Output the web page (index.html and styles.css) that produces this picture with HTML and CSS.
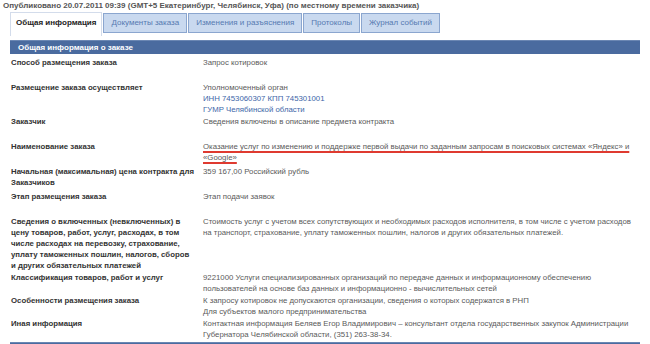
FILE: index.html
```html
<!DOCTYPE html>
<html lang="ru">
<head>
  <meta charset="UTF-8">
  <title>Общая информация о заказе</title>
  <link rel="stylesheet" href="styles.css">
</head>
<body>
  <div class="published">Опубликовано 20.07.2011 09:39 (GMT+5 Екатеринбург, Челябинск, Уфа) (по местному времени заказчика)</div>

  <div class="tabs">
    <div class="tab active">Общая информация</div>
    <div class="tab">Документы заказа</div>
    <div class="tab">Изменения и разъяснения</div>
    <div class="tab">Протоколы</div>
    <div class="tab">Журнал событий</div>
  </div>

  <div class="section">
    <div class="section-title">Общая информация о заказе</div>

    <div class="info">
      <div class="row">
        <div class="label">Способ размещения заказа</div>
        <div class="value">Запрос котировок</div>
      </div>
      <div class="row">
        <div class="label">Размещение заказа осуществляет</div>
        <div class="value">Уполномоченный орган<br><span class="link">ИНН 7453060307 КПП 745301001</span><br><span class="link">ГУМР Челябинской области</span></div>
      </div>
      <div class="row">
        <div class="label">Заказчик</div>
        <div class="value">Сведения включены в описание предмета контракта</div>
      </div>
      <div class="row">
        <div class="label">Наименование заказа</div>
        <div class="value"><span class="marked">Оказание услуг по изменению и поддержке первой выдачи по заданным запросам в поисковых системах «Яндекс» и «Google»</span></div>
      </div>
      <div class="row">
        <div class="label">Начальная (максимальная) цена контракта для Заказчиков</div>
        <div class="value">359 167,00 Российский рубль</div>
      </div>
      <div class="row">
        <div class="label">Этап размещения заказа</div>
        <div class="value">Этап подачи заявок</div>
      </div>
      <div class="row">
        <div class="label">Сведения о включенных (невключенных) в цену товаров, работ, услуг, расходах, в том числе расходах на перевозку, страхование, уплату таможенных пошлин, налогов, сборов и&nbsp;других обязательных платежей</div>
        <div class="value">Стоимость услуг с учетом всех сопутствующих и необходимых расходов исполнителя, в том числе с учетом расходов на транспорт, страхование, уплату таможенных пошлин, налогов и других обязательных платежей.</div>
      </div>
      <div class="row tight">
        <div class="label">Классификация товаров, работ и услуг</div>
        <div class="value">9221000 Услуги специализированных организаций по передаче данных и информационному обеспечению пользователей на основе баз данных и информационно - вычислительных сетей</div>
      </div>
      <div class="row tight">
        <div class="label">Особенности размещения заказа</div>
        <div class="value">К запросу котировок не допускаются организации, сведения о которых содержатся в РНП<br>Для субъектов малого предпринимательства</div>
      </div>
      <div class="row tight">
        <div class="label">Иная информация</div>
        <div class="value">Контактная информация Беляев Егор Владимирович – консультант отдела государственных закупок Администрации Губернатора Челябинской области, (351) 263-38-34.</div>
      </div>
    </div>

    <div class="section-title"></div>
  </div>
</body>
</html>
```

FILE: styles.css
```css
/* Page */
body {
  margin: 0;
  background-color: #fff;
  font-family: "Liberation Sans", Arial, sans-serif;
  font-size: 8px;
  line-height: 11px;
  color: #555;
}

.published {
  padding: 0 3px;
  font-weight: bold;
  color: #555;
}

/* Tabs */
.tabs {
  display: flex;
  align-items: flex-start;
  gap: 1px;
  margin: 2px 0 0 10px;
  height: 27px;
}
.tab {
  padding: 4px 7px;
  line-height: 10px;
  background-color: #c9d9ef;
  border: 1px solid #8ba6cf;
  color: #5679b1;
}
.tab.active {
  padding: 5px 5px 8px;
  margin-top: -1px;
  background-color: #fff;
  border-color: #d3dceb;
  border-bottom: none;
  font-weight: bold;
  color: #222;
}

/* Section */
.section {
  margin: 0 10px;
}
.section-title {
  height: 13px;
  padding-left: 8px;
  background-color: #4a6b9f;
  border-top: 1px solid #6b87b3;
  color: #fff;
  font-weight: bold;
  line-height: 13px;
}

.info {
  padding: 3px 0 1px 1px;
  font-size: 7.8px;
}
.row {
  display: grid;
  grid-template-columns: 192px 1fr;
  min-height: 25px;
  padding-bottom: 1px;
  box-sizing: border-box;
}
.row.tight {
  min-height: 0;
}
.label {
  padding-right: 5px;
  font-weight: bold;
  color: #333;
}
.value {
  color: #5a5a5a;
}
.link {
  color: #3d66a8;
}
.marked {
  text-decoration: underline;
  text-decoration-color: #df3a30;
  text-decoration-thickness: 2px;
  text-underline-offset: 2px;
}
```
